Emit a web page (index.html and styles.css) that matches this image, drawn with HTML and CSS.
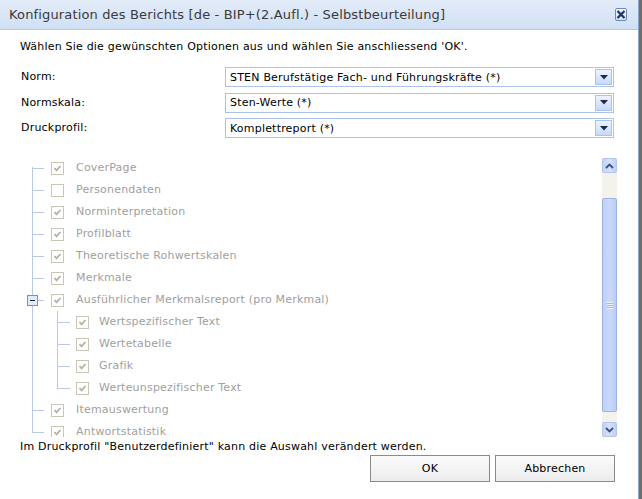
FILE: index.html
```html
<!DOCTYPE html>
<html lang="de">
<head>
<meta charset="utf-8">
<title>Konfiguration des Berichts</title>
<link rel="stylesheet" href="styles.css">
</head>
<body>
<div class="window">
  <div class="titlebar">
    <span class="title">Konfiguration des Berichts [de - BIP+(2.Aufl.) - Selbstbeurteilung]</span>
    <span class="close"><svg width="10" height="11" viewBox="0 0 10 11"><path d="M1.5 2 L8.5 9 M8.5 2 L1.5 9" stroke="#1d3366" stroke-width="2.2" fill="none"/></svg></span>
  </div>
  <div class="content">
    <p class="intro">Wählen Sie die gewünschten Optionen aus und wählen Sie anschliessend 'OK'.</p>
    <div class="form">
      <span class="label">Norm:</span>
      <div class="select"><span class="value">STEN Berufstätige Fach- und Führungskräfte (*)</span><span class="trigger"><svg width="8" height="5" viewBox="0 0 8 5"><path d="M0 0 H8 L4 4.5 Z" fill="#1e2b47"/></svg></span></div>
      <span class="label">Normskala:</span>
      <div class="select"><span class="value">Sten-Werte (*)</span><span class="trigger"><svg width="8" height="5" viewBox="0 0 8 5"><path d="M0 0 H8 L4 4.5 Z" fill="#1e2b47"/></svg></span></div>
      <span class="label">Druckprofil:</span>
      <div class="select"><span class="value">Komplettreport (*)</span><span class="trigger"><svg width="8" height="5" viewBox="0 0 8 5"><path d="M0 0 H8 L4 4.5 Z" fill="#1e2b47"/></svg></span></div>
    </div>
    <div class="treebox">
      <div class="tree">
        <div class="row"><span class="br first"></span><span class="cb"><svg width="11" height="11" viewBox="0 0 11 11"><path d="M2.5 5 L4.5 7.3 L8.5 3" stroke="#b3b1a3" stroke-width="1.8" fill="none"/></svg></span><span class="lbl">CoverPage</span></div>
        <div class="row"><span class="br"></span><span class="cb"></span><span class="lbl">Personendaten</span></div>
        <div class="row"><span class="br"></span><span class="cb"><svg width="11" height="11" viewBox="0 0 11 11"><path d="M2.5 5 L4.5 7.3 L8.5 3" stroke="#b3b1a3" stroke-width="1.8" fill="none"/></svg></span><span class="lbl">Norminterpretation</span></div>
        <div class="row"><span class="br"></span><span class="cb"><svg width="11" height="11" viewBox="0 0 11 11"><path d="M2.5 5 L4.5 7.3 L8.5 3" stroke="#b3b1a3" stroke-width="1.8" fill="none"/></svg></span><span class="lbl">Profilblatt</span></div>
        <div class="row"><span class="br"></span><span class="cb"><svg width="11" height="11" viewBox="0 0 11 11"><path d="M2.5 5 L4.5 7.3 L8.5 3" stroke="#b3b1a3" stroke-width="1.8" fill="none"/></svg></span><span class="lbl">Theoretische Rohwertskalen</span></div>
        <div class="row"><span class="br"></span><span class="cb"><svg width="11" height="11" viewBox="0 0 11 11"><path d="M2.5 5 L4.5 7.3 L8.5 3" stroke="#b3b1a3" stroke-width="1.8" fill="none"/></svg></span><span class="lbl">Merkmale</span></div>
        <div class="row"><span class="br"><span class="minus"></span></span><span class="cb"><svg width="11" height="11" viewBox="0 0 11 11"><path d="M2.5 5 L4.5 7.3 L8.5 3" stroke="#b3b1a3" stroke-width="1.8" fill="none"/></svg></span><span class="lbl">Ausführlicher Merkmalsreport (pro Merkmal)</span></div>
        <div class="row"><span class="pipe"></span><span class="br child"></span><span class="cb"><svg width="11" height="11" viewBox="0 0 11 11"><path d="M2.5 5 L4.5 7.3 L8.5 3" stroke="#b3b1a3" stroke-width="1.8" fill="none"/></svg></span><span class="lbl sub">Wertspezifischer Text</span></div>
        <div class="row"><span class="pipe"></span><span class="br child"></span><span class="cb"><svg width="11" height="11" viewBox="0 0 11 11"><path d="M2.5 5 L4.5 7.3 L8.5 3" stroke="#b3b1a3" stroke-width="1.8" fill="none"/></svg></span><span class="lbl sub">Wertetabelle</span></div>
        <div class="row"><span class="pipe"></span><span class="br child"></span><span class="cb"><svg width="11" height="11" viewBox="0 0 11 11"><path d="M2.5 5 L4.5 7.3 L8.5 3" stroke="#b3b1a3" stroke-width="1.8" fill="none"/></svg></span><span class="lbl sub">Grafik</span></div>
        <div class="row"><span class="pipe"></span><span class="br child last"></span><span class="cb"><svg width="11" height="11" viewBox="0 0 11 11"><path d="M2.5 5 L4.5 7.3 L8.5 3" stroke="#b3b1a3" stroke-width="1.8" fill="none"/></svg></span><span class="lbl sub">Werteunspezifischer Text</span></div>
        <div class="row"><span class="br"></span><span class="cb"><svg width="11" height="11" viewBox="0 0 11 11"><path d="M2.5 5 L4.5 7.3 L8.5 3" stroke="#b3b1a3" stroke-width="1.8" fill="none"/></svg></span><span class="lbl">Itemauswertung</span></div>
        <div class="row"><span class="br last"></span><span class="cb"><svg width="11" height="11" viewBox="0 0 11 11"><path d="M2.5 5 L4.5 7.3 L8.5 3" stroke="#b3b1a3" stroke-width="1.8" fill="none"/></svg></span><span class="lbl">Antwortstatistik</span></div>
      </div>
      <div class="scrollbar">
        <span class="sb-btn"><svg width="9" height="6" viewBox="0 0 9 6"><path d="M1 5 L4.5 1.5 L8 5" stroke="#3d5080" stroke-width="1.8" fill="none"/></svg></span>
        <div class="sb-track"><div class="thumb"><span class="grip"></span></div></div>
        <span class="sb-btn"><svg width="9" height="6" viewBox="0 0 9 6"><path d="M1 1 L4.5 4.5 L8 1" stroke="#3d5080" stroke-width="1.8" fill="none"/></svg></span>
      </div>
    </div>
    <p class="hint">Im Druckprofil "Benutzerdefiniert" kann die Auswahl verändert werden.</p>
    <div class="buttons">
      <button class="btn" type="button">OK</button>
      <button class="btn" type="button">Abbrechen</button>
    </div>
  </div>
</div>
</body>
</html>
```
FILE: styles.css
```css
* { box-sizing: border-box; }
html, body { margin: 0; padding: 0; }
body {
  background: #6e6e6e;
  font-family: "DejaVu Sans", sans-serif;
  font-size: 11px;
  letter-spacing: 0.2px;
  color: #000;
  width: 642px;
  height: 499px;
  overflow: hidden;
}
.window {
  width: 639px;
  height: 499px;
  background: #fff;
  border-right: 1px solid #8ea6d2;
  display: flex;
  flex-direction: column;
}
.titlebar {
  height: 30px;
  flex: none;
  display: flex;
  align-items: center;
  justify-content: space-between;
  padding: 0 11px 1px 9px;
  background: linear-gradient(#e3ecf9, #d0e0f5);
  border-bottom: 1px solid #b4c8e8;
}
.title {
  font-family: "DejaVu Sans", sans-serif;
  font-size: 13px;
  letter-spacing: 0.15px;
  color: #3a3a3a;
}
.close {
  width: 12px;
  height: 13px;
  border: 1px solid #6f88bc;
  border-radius: 2px;
  background: linear-gradient(#f4f8ff, #d2e0f6);
  display: flex;
  align-items: center;
  justify-content: center;
}
.content {
  flex: 1;
  padding: 0 24px 0 20px;
  display: flex;
  flex-direction: column;
}
.intro {
  margin: 10px 0 0;
  line-height: 14px;
}
.form {
  margin-top: 13px;
  display: grid;
  grid-template-columns: 205px 1fr;
  row-gap: 5.5px;
}
.label {
  padding-left: 1px;
  line-height: 20px;
}
.select {
  height: 20px;
  border: 1px solid #abc3eb;
  display: flex;
  align-items: center;
  justify-content: space-between;
  padding: 0 1px 0 4px;
  white-space: nowrap;
}
.trigger {
  width: 17px;
  height: 16px;
  border: 1px solid #a9c2ee;
  background: linear-gradient(#eef4fe, #c6d9f9);
  display: flex;
  align-items: center;
  justify-content: center;
}
.treebox {
  margin: 19px -3px 0 0;
  height: 280px;
  display: flex;
}
.tree {
  flex: 1;
  overflow: hidden;
  padding-left: 6px;
  color: #a0a0a0;
}
.row {
  height: 22px;
  display: flex;
  align-items: flex-start;
  white-space: nowrap;
}
.br, .pipe {
  --line: #b9c9e4;
  width: 25px;
  height: 22px;
  flex: none;
  background:
    linear-gradient(var(--line), var(--line)) 6px 0 / 1px 22px no-repeat,
    linear-gradient(var(--line), var(--line)) 6px 11px / 12px 1px no-repeat;
}
.br.first {
  background:
    linear-gradient(var(--line), var(--line)) 6px 10px / 1px 12px no-repeat,
    linear-gradient(var(--line), var(--line)) 6px 11px / 12px 1px no-repeat;
}
.br.last {
  background:
    linear-gradient(var(--line), var(--line)) 6px 0 / 1px 12px no-repeat,
    linear-gradient(var(--line), var(--line)) 6px 11px / 12px 1px no-repeat;
}
.br.child {
  background:
    linear-gradient(var(--line), var(--line)) 6px 0 / 1px 22px no-repeat,
    linear-gradient(var(--line), var(--line)) 6px 11px / 13px 1px no-repeat;
}
.br.child.last {
  background:
    linear-gradient(var(--line), var(--line)) 6px 0 / 1px 12px no-repeat,
    linear-gradient(var(--line), var(--line)) 6px 11px / 13px 1px no-repeat;
}
.pipe {
  background: linear-gradient(var(--line), var(--line)) 6px 0 / 1px 22px no-repeat;
}
.minus {
  display: flex;
  width: 11px;
  height: 11px;
  margin: 6px 0 0 1px;
  border: 1px solid #6f92cf;
  background: #e2ebfa;
  align-items: center;
  justify-content: center;
}
.minus::before {
  content: "";
  width: 5px;
  height: 1px;
  background: #132650;
}
.cb {
  flex: none;
  width: 13px;
  height: 13px;
  margin-top: 5px;
  border: 1px solid #c9c6b6;
  background: #fff;
  display: flex;
}
.lbl {
  margin-left: 12px;
  line-height: 22px;
}
.lbl.sub { margin-left: 10px; }
.scrollbar {
  flex: none;
  width: 15px;
  margin-top: 1px;
  height: 279px;
  display: flex;
  flex-direction: column;
  background: #f3f2ec;
}
.sb-btn {
  height: 15px;
  flex: none;
  border: 1px solid #b3c6ec;
  border-radius: 2px;
  background: linear-gradient(90deg, #c2d4f8, #d4e1fb 50%, #bcd0f7);
  display: flex;
  align-items: center;
  justify-content: center;
}
.sb-track {
  flex: 1;
  padding: 25px 0 10px;
  display: flex;
}
.thumb {
  flex: 1;
  border: 1px solid #9fb3e3;
  border-radius: 2px;
  background: linear-gradient(90deg, #bcd0fa, #cbdafc 50%, #b8cdf8);
  display: flex;
  align-items: center;
  justify-content: center;
}
.grip {
  width: 6px;
  height: 7px;
  background: repeating-linear-gradient(#eef3ff 0 1px, #9fb4e2 1px 2px);
}
.hint {
  margin: 3px 0 0;
  line-height: 14px;
}
.buttons {
  margin: 1px -1px 0 0;
  display: flex;
  justify-content: flex-end;
  gap: 5px;
}
.btn {
  width: 120px;
  height: 27px;
  border: 1px solid #8a8a8a;
  background: linear-gradient(#fbfbfb, #ececec);
  font-family: inherit;
  font-size: 11px;
  letter-spacing: 0.2px;
  color: #000;
  padding: 0;
}
```
